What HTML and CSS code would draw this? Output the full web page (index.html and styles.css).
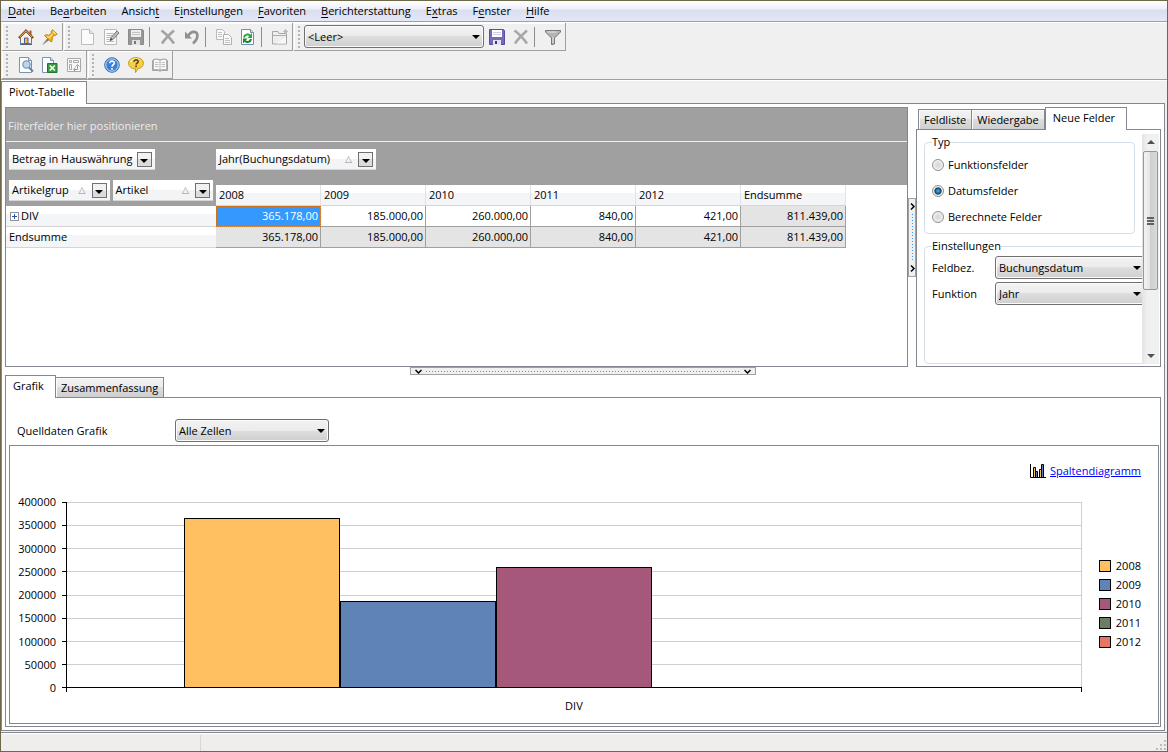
FILE: index.html
```html
<!DOCTYPE html>
<html lang="de">
<head>
    <meta charset="UTF-8">
    <meta name="viewport" content="width=device-width, initial-scale=1.0">
    <title>Pivot-Tabelle</title>
    <link rel="stylesheet" href="styles.css">
</head>
<body>
    <nav class="menubar">
        <button><u>D</u>atei</button>
        <button>Be<u>a</u>rbeiten</button>
        <button>Ansich<u>t</u></button>
        <button>E<u>i</u>nstellungen</button>
        <button><u>F</u>avoriten</button>
        <button><u>B</u>erichterstattung</button>
        <button>E<u>x</u>tras</button>
        <button>F<u>e</u>nster</button>
        <button><u>H</u>ilfe</button>
    </nav>

    <div class="toolbars">
        <div class="toolbar-row">
            <div class="toolbar">
                <i class="grip"></i>
                <button class="tool" aria-label="Start">
                    <svg viewBox="0 0 16 16"><path d="M11.500 1.500h2v5l-2-2z" fill="#b5502f"/><path d="M2.500 8.500v6h11v-6L8 3z" fill="#f6f1e6" stroke="#6d7488"/><path d="M.8 9L8 1.500 15.200 9" fill="none" stroke="#7a4a26" stroke-width="2"/><path d="M1.800 8L8 1.800 14.200 8" fill="none" stroke="#f6b445" stroke-width="1"/><path d="M6.500 9h3.500v5.500H6.500z" fill="#f2b24c" stroke="#4a5f96"/><path d="M2 15.500h12" stroke="#56617a"/></svg>
                </button>
                <button class="tool" aria-label="Anheften">
                    <svg viewBox="0 0 16 16"><path d="M.8 15.500l4.700-6 1.500 1.500z" fill="#8a7340" stroke="#8d8d8d" stroke-width=".5"/><path d="M2.500 6.500c1.500-1 3-1 4.200-.3L9.500 4.500C8.800 3 9.300 1.500 10.500.8L15.200 5c-.8 1.300-2.200 1.700-3.500 1.200L10 9c.7 1.500.4 2.800-.8 4z" fill="#f3b01d" stroke="#b97c08" stroke-width=".9"/><path d="M5 7.800l2.800.6L10.500 5M11 2.500l2.500 2.300" fill="none" stroke="#ffe48a" stroke-width="1.300"/></svg>
                </button>
            </div>
            <div class="toolbar">
                <i class="grip"></i>
                <button class="tool" aria-label="Neu">
                    <svg viewBox="0 0 16 16"><path d="M1.500.500h8l4 4v11h-12z" fill="#fbfbfb" stroke="#bdbdbd"/><path d="M9.500.500v4h4" fill="#e4e4e4" stroke="#bdbdbd"/></svg>
                </button>
                <button class="tool" aria-label="Bearbeiten">
                    <svg viewBox="0 0 16 16"><path d="M.5.500h12v15H.5z" fill="#fafafa" stroke="#b9b9b9"/><path d="M2.500 4.500h7M2.500 6.500h6M2.500 8.500h4M2.500 10.500h3M2.500 12.500h8" stroke="#bbb"/><path d="M6 11.500l1-3L13 2l2 2-6 6.500z" fill="#bdbdbd" stroke="#777"/><path d="M6 11.500l1-2.500 1.500 1.500z" fill="#444"/></svg>
                </button>
                <button class="tool" aria-label="Speichern">
                    <svg viewBox="0 0 16 16"><path d="M.5.500h14l1 1v14H.5z" fill="#979797" stroke="#8a8a8a"/><path d="M3 1h10v7H3z" fill="#ededed"/><path d="M4 3.500h8M4 5.500h8" stroke="#c4c4c4"/><path d="M4 11h8v5H4z" fill="#e2e2e2"/><path d="M6 12h2v3H6z" fill="#777"/></svg>
                </button>
                <i class="sep"></i>
                <button class="tool" aria-label="Löschen">
                    <svg viewBox="0 0 16 16"><path d="M1.500 1.500C5 4 10 9 14 14.500M14 1.500C10 5 5 10 2 14.500" stroke="#a3a3a3" stroke-width="2.600" fill="none"/></svg>
                </button>
                <button class="tool" aria-label="Rückgängig">
                    <svg viewBox="0 0 16 16"><path d="M4 7C6 3.500 9 2.500 11 3c3.500 1 3.500 7-2 11.500" fill="none" stroke="#909090" stroke-width="2.600"/><path d="M1 2.500v7h7z" fill="#909090"/></svg>
                </button>
                <i class="sep"></i>
                <button class="tool" aria-label="Kopieren">
                    <svg viewBox="0 0 16 16"><path d="M.5.500h6l2 2v8h-8z" fill="#fafafa" stroke="#b9b9b9"/><path d="M7.500 5.500h5l3 3v7h-8z" fill="#fafafa" stroke="#b0b0b0"/><path d="M2 3.500h4M2 5.500h4M2 7.500h4M9 9.500h4M9 11.500h5M9 13.500h5" stroke="#c2c2c2"/></svg>
                </button>
                <button class="tool" aria-label="Aktualisieren">
                    <svg viewBox="0 0 16 16"><path d="M1.500.500h9l3 3v12h-12z" fill="#fdfeff" stroke="#6f8fae"/><path d="M10.500.500v3h3" fill="#cfdeec" stroke="#6f8fae"/><path d="M4 8.500c.5-3 4-4 6-2" fill="none" stroke="#2ba43a" stroke-width="2"/><path d="M12 4v5H7.500z" fill="#2ba43a"/><path d="M11 10c-.5 3-4 4-6 2" fill="none" stroke="#168a2b" stroke-width="2"/><path d="M3 14.500v-5h4.500z" fill="#168a2b"/></svg>
                </button>
                <i class="sep"></i>
                <button class="tool" aria-label="Neuer Ordner">
                    <svg viewBox="0 0 16 16"><path d="M.5 15V2.500h5.500l1 2h7.500V15z" fill="#ededed" stroke="#a5a5a5"/><path d="M1 6.500h13" stroke="#b0b0b0"/><path d="M14 8v6.500H4z" fill="#f8f8f8"/><path d="M13.500 0v5M11 2.500h5M12 1l3 3M15 1l-3 3" stroke="#b4b4b4" stroke-width=".8"/></svg>
                </button>
            </div>
            <div class="toolbar">
                <i class="grip"></i>
                <div class="select select-layout">
                    <select aria-label="Layout"><option>&lt;Leer&gt;</option></select>
                </div>
                <button class="tool" aria-label="Layout speichern">
                    <svg viewBox="0 0 16 16"><path d="M.5.500h14l1 1v14H.5z" fill="#7a69b8" stroke="#5c4c9c"/><path d="M3 1h10v7H3z" fill="#fff"/><path d="M4 3.500h8M4 5.500h8" stroke="#cfcbe0"/><path d="M4 11h8v5H4z" fill="#e4e2f0"/><path d="M6 12h2v3H6z" fill="#43357c"/></svg>
                </button>
                <button class="tool" aria-label="Layout löschen">
                    <svg viewBox="0 0 16 16"><path d="M1.500 1.500C5 4 10 9 14 14.500M14 1.500C10 5 5 10 2 14.500" stroke="#a8a8a8" stroke-width="2.600" fill="none"/></svg>
                </button>
                <i class="sep"></i>
                <button class="tool" aria-label="Filter">
                    <svg viewBox="0 0 16 16"><path d="M.5 1.500h15v1.500L9.500 9v6l-3 .5V9L.5 3z" fill="#b4b4b4" stroke="#777"/><path d="M2.500 3h9M8 8v6" stroke="#e6e6e6"/></svg>
                </button>
            </div>
        </div>
        <div class="toolbar-row">
            <div class="toolbar">
                <i class="grip"></i>
                <button class="tool" aria-label="Vorschau">
                    <svg viewBox="0 0 16 16"><path d="M1.500.500h9l3 3v12h-12z" fill="#fdfeff" stroke="#7d93ab"/><path d="M10.500.500v3h3" fill="#cfdeec" stroke="#7d93ab"/><circle cx="8.500" cy="7.500" r="3.700" fill="#b9d6f3" stroke="#8097b5" stroke-width="1.300"/><path d="M11 10.500l4 4" stroke="#6f7f98" stroke-width="2"/></svg>
                </button>
                <button class="tool" aria-label="Excel-Export">
                    <svg viewBox="0 0 16 16"><path d="M.5.500h8l3 3v12h-11z" fill="#fdfeff" stroke="#7d93ab"/><path d="M8.500.500v3h3" fill="#cfdeec" stroke="#7d93ab"/><path d="M5.500 6.500h9.500v9h-9.500z" fill="#3c9a43" stroke="#23752c"/><path d="M7.800 8.500l5 5M12.800 8.500l-5 5" stroke="#fff" stroke-width="1.600"/></svg>
                </button>
                <button class="tool" aria-label="Pivot">
                    <svg viewBox="0 0 16 16"><path d="M1.500 1.500h13v13h-13z" fill="#f9f9f9" stroke="#a8a8a8"/><path d="M3.500 3.500h2v2h-2zM7.500 3.500h5v2h-5zM3.500 7.500h2v5h-2z" fill="#fff" stroke="#a8a8a8"/><path d="M8 12.500h3.500v-4M9.500 10.500l-2 2 2 2M9.500 9.500l2-2 2 2" fill="none" stroke="#999"/></svg>
                </button>
            </div>
            <div class="toolbar">
                <i class="grip"></i>
                <button class="tool" aria-label="Hilfe">
                    <svg viewBox="0 0 16 16"><circle cx="8" cy="8" r="7.300" fill="#3d7fd0" stroke="#3f73b8"/><circle cx="8" cy="8" r="6.200" fill="none" stroke="#c4dcf6"/><path d="M5.700 6.300c0-3 4.800-2.800 4.600 0-.1 1.500-2.300 1.500-2.300 3.400M8 11v1.800" fill="none" stroke="#fff" stroke-width="1.600"/></svg>
                </button>
                <button class="tool" aria-label="Direkthilfe">
                    <svg viewBox="0 0 16 16"><path d="M8 .6c4.200 0 7.400 2.300 7.400 5.600 0 3-2.500 5-5.400 5.500L7.500 15.500V12C3.500 11.800.6 9.400.6 6.200.6 2.900 3.800.6 8 .6z" fill="#f6cf46" stroke="#c39a1e"/><path d="M2.500 5C4 2 8 1.500 11 2.500" fill="none" stroke="#fff3b0" stroke-width="1.400"/><path d="M5.900 4.800c0-2.800 4.500-2.600 4.300 0-.1 1.300-2.100 1.300-2.100 2.700M8.100 8.500v1.700" fill="none" stroke="#4c4416" stroke-width="1.600"/></svg>
                </button>
                <button class="tool" aria-label="Handbuch">
                    <svg viewBox="0 0 16 16"><path d="M.5 3.500h1v-1c2.500-.8 4.500-.5 6.500.5 2-1 4-1.300 6.500-.5v1h1v10H9l-1 1-1-1H.5z" fill="#b0b0b0" stroke="#a2a2a2"/><path d="M2 3c2-.6 4-.5 5.500.5v9C6 11.800 4 11.800 2 12.200zM14 3c-2-.6-4-.5-5.500.5v9c1.500-.7 3.500-.7 5.500-.3z" fill="#fafafa"/><path d="M3 5.500h3.500M3 7.500h3.500M3 9.500h3.500M9.500 5.500H13M9.500 7.500H13M9.500 9.500H13" stroke="#c0c0c0"/></svg>
                </button>
            </div>
        </div>
    </div>

    <div class="tabs doc-tabs" role="tablist">
        <button class="tab active" role="tab">Pivot-Tabelle</button>
    </div>

    <main class="workspace">
        <div class="top">
            <section class="pivot">
                <div class="filter-drop">Filterfelder hier positionieren</div>
                <table class="pivot-table">
                    <colgroup>
                        <col class="col-rows">
                        <col class="col-value" span="6">
                        <col>
                    </colgroup>
                    <thead>
                        <tr class="fields">
                            <th class="corner" rowspan="2">
                                <div class="chips">
                                    <div class="chip">Betrag in Hauswährung <button class="drop" aria-label="Filter Betrag"></button></div>
                                </div>
                                <div class="chips fill">
                                    <div class="chip"><span>Artikelgrup</span> <i class="sort">△</i> <button class="drop" aria-label="Filter Artikelgruppe"></button></div>
                                    <div class="chip"><span>Artikel</span> <i class="sort">△</i> <button class="drop" aria-label="Filter Artikel"></button></div>
                                </div>
                            </th>
                            <th class="column-fields" colspan="7">
                                <div class="chips">
                                    <div class="chip wide"><span>Jahr(Buchungsdatum)</span> <i class="sort">△</i> <button class="drop" aria-label="Filter Jahr"></button></div>
                                </div>
                            </th>
                        </tr>
                        <tr class="years">
                            <th>2008</th>
                            <th>2009</th>
                            <th>2010</th>
                            <th>2011</th>
                            <th>2012</th>
                            <th>Endsumme</th>
                            <td></td>
                        </tr>
                    </thead>
                    <tbody>
                        <tr>
                            <th><button class="expand" aria-label="DIV aufklappen"></button>DIV</th>
                            <td class="selected">365.178,00</td>
                            <td>185.000,00</td>
                            <td>260.000,00</td>
                            <td>840,00</td>
                            <td>421,00</td>
                            <td class="sum">811.439,00</td>
                            <td class="rest"></td>
                        </tr>
                        <tr class="total">
                            <th>Endsumme</th>
                            <td>365.178,00</td>
                            <td>185.000,00</td>
                            <td>260.000,00</td>
                            <td>840,00</td>
                            <td>421,00</td>
                            <td>811.439,00</td>
                            <td class="rest"></td>
                        </tr>
                    </tbody>
                </table>
            </section>

            <div class="splitter vertical">
                <svg viewBox="0 0 5 7"><path d="M1 .5l3 3-3 3" /></svg>
                <i class="dots"></i>
                <svg viewBox="0 0 5 7"><path d="M1 .5l3 3-3 3" /></svg>
            </div>

            <aside class="side">
                <div class="tabs side-tabs" role="tablist">
                    <button class="tab" role="tab">Feldliste</button>
                    <button class="tab" role="tab">Wiedergabe</button>
                    <button class="tab active" role="tab">Neue Felder</button>
                </div>
                <div class="side-panel">
                    <form class="side-form">
                        <fieldset class="type">
                            <legend>Typ</legend>
                            <label><input type="radio" name="typ"> Funktionsfelder</label>
                            <label><input type="radio" name="typ" checked> Datumsfelder</label>
                            <label><input type="radio" name="typ"> Berechnete Felder</label>
                        </fieldset>
                        <fieldset class="settings">
                            <legend>Einstellungen</legend>
                            <div class="field">
                                <label for="feldbez">Feldbez.</label>
                                <div class="select"><select id="feldbez"><option>Buchungsdatum</option></select></div>
                            </div>
                            <div class="field">
                                <label for="funktion">Funktion</label>
                                <div class="select"><select id="funktion"><option>Jahr</option></select></div>
                            </div>
                        </fieldset>
                    </form>
                    <div class="scrollbar">
                        <svg viewBox="0 0 8 4"><path d="M0 4l4-4 4 4z"/></svg>
                        <div class="track"><div class="thumb"></div></div>
                        <svg viewBox="0 0 8 4"><path d="M0 0l4 4 4-4z"/></svg>
                    </div>
                </div>
            </aside>
        </div>

        <div class="splitter horizontal">
            <svg viewBox="0 0 7 5"><path d="M.5 1l3 3 3-3"/></svg>
            <i class="dots"></i>
            <svg viewBox="0 0 7 5"><path d="M.5 1l3 3 3-3"/></svg>
        </div>

        <section class="bottom">
            <div class="tabs" role="tablist">
                <button class="tab active" role="tab">Grafik</button>
                <button class="tab" role="tab">Zusammenfassung</button>
            </div>
            <div class="bottom-panel">
                <div class="source">
                    <label for="quelle">Quelldaten Grafik</label>
                    <div class="select"><select id="quelle"><option>Alle Zellen</option></select></div>
                </div>
                <div class="chart">
                    <div class="chart-type">
                        <svg viewBox="0 0 16 15"><path d="M.5 0v13.500H16" fill="none" stroke="#000"/><path d="M3.500 13V3.500h2V13" fill="#ffc061" stroke="#000"/><path d="M5.500 13V7.500h2V13" fill="#5f83b5" stroke="#000"/><path d="M9.500 13V5.500h2V13" fill="#ffc061" stroke="#000"/><path d="M11.500 13V.500h2V13" fill="#5f83b5" stroke="#000"/></svg>
                        <a href="#">Spaltendiagramm</a>
                    </div>
                    <div class="chart-body">
                        <div class="axis">
                            <span>400000</span>
                            <span>350000</span>
                            <span>300000</span>
                            <span>250000</span>
                            <span>200000</span>
                            <span>150000</span>
                            <span>100000</span>
                            <span>50000</span>
                            <span>0</span>
                        </div>
                        <div class="plot">
                            <div class="lines"><i></i><i></i><i></i><i></i><i></i><i></i><i></i><i></i></div>
                            <div class="bars">
                                <div class="bar y2008" style="height: 91.3%"></div>
                                <div class="bar y2009" style="height: 46.25%"></div>
                                <div class="bar y2010" style="height: 65%"></div>
                            </div>
                        </div>
                        <ul class="legend">
                            <li><i class="y2008"></i>2008</li>
                            <li><i class="y2009"></i>2009</li>
                            <li><i class="y2010"></i>2010</li>
                            <li><i class="y2011"></i>2011</li>
                            <li><i class="y2012"></i>2012</li>
                        </ul>
                        <div class="category">DIV</div>
                    </div>
                </div>
            </div>
        </section>
    </main>

    <footer class="statusbar">
        <div class="status-cell"></div>
        <svg viewBox="0 0 11 11"><path d="M8 0h2v2H8zM8 4h2v2H8zM8 8h2v2H8zM4 4h2v2H4zM4 8h2v2H4zM0 8h2v2H0z" fill="#bdbaba"/></svg>
    </footer>
</body>
</html>
```
FILE: styles.css
```css
* {
    box-sizing: border-box;
}

body {
    display: flex;
    flex-direction: column;
    min-height: 100vh;
    margin: 0;
    border: 1px solid #6e684b;
    background-color: #f0f0f0;
    color: #000;
    font-family: "Open Sans", "Noto Sans", sans-serif;
    font-size: 11px;
    line-height: 16px;
}

button, select, input {
    margin: 0;
    padding: 0;
    border: none;
    background: none;
    color: inherit;
    font: inherit;
}

i {
    font-style: normal;
}

svg {
    display: block;
}

/* Menü */
.menubar {
    display: flex;
    gap: 15px;
    height: 21px;
    padding: 0 7px;
    border-bottom: 1px solid #a0a0a0;
    background: linear-gradient(#fff, #eef0f8 40%, #d9dff0 45%, #e3e7f6);
}

.menubar u {
    text-underline-offset: 2px;
}

/* Symbolleisten */
.toolbars {
    padding: 0 1px;
    border-bottom: 1px solid #a0a0a0;
    border-top: 1px solid #fff;
}

.toolbar-row {
    display: flex;
    gap: 1px;
}

.toolbar {
    display: flex;
    align-items: center;
    height: 28px;
    border: 1px solid #a0a0a0;
    border-width: 0 1px 1px 0;
    box-shadow: inset 1px 1px #fff;
}

.grip {
    width: 2px;
    height: 22px;
    margin: 0 4px;
    background: repeating-linear-gradient(#b4b4b4 0 2px, transparent 2px 4px);
}

.grip + .tool {
    margin-left: 2px;
}

.tool {
    display: grid;
    place-items: center;
    width: 24px;
    height: 24px;
}

.tool svg {
    width: 16px;
    height: 16px;
}

.sep {
    width: 1px;
    height: 20px;
    margin: 0 6px 0 1px;
    background-color: #8c8c8c;
}

.select {
    position: relative;
}

.select select {
    display: block;
    width: 100%;
    height: 23px;
    padding: 0 3px;
    border: 1px solid #707070;
    border-radius: 3px;
    background: linear-gradient(#f3f3f3, #ebebeb 50%, #dedede 50%, #cfcfcf);
    box-shadow: inset 0 0 0 1px #fbfbfb;
    appearance: none;
}

.select::after {
    content: "";
    position: absolute;
    top: 10px;
    right: 4px;
    border: 4px solid transparent;
    border-top-color: #000;
    border-bottom: none;
}

.select-layout {
    width: 180px;
    margin-right: 1px;
}

/* Reiter */
.tabs {
    display: flex;
    align-items: flex-end;
    height: 22px;
}

.tab {
    height: 20px;
    padding: 0 5px;
    border: 1px solid #828790;
    border-bottom: none;
    background: linear-gradient(#f2f2f2, #ebebeb 50%, #dddddd 50%, #cfcfcf);
    box-shadow: inset 1px 1px #fbfbfb;
}

.tab + .tab {
    border-left: none;
}

.tab.active {
    position: relative;
    height: 23px;
    margin-bottom: -1px;
    padding: 0 11px 2px 7px;
    border-left: 1px solid #828790;
    background: #fff;
    box-shadow: none;
}

.doc-tabs {
    height: 23px;
    border-top: 1px solid #fff;
}

.workspace {
    display: flex;
    flex: 1;
    flex-direction: column;
    margin-right: 2px;
    padding: 3px;
    border: 1px solid #828790;
    background-color: #fff;
}

.top {
    display: flex;
    height: 260px;
}

/* Pivot-Tabelle */
.pivot {
    flex: 1;
    min-width: 0;
    border: 1px solid #828790;
}

.filter-drop {
    height: 34px;
    padding: 10px 2px 0;
    background-color: #a0a0a0;
    color: #ececec;
    box-shadow: inset 0 -1px #f0f0f0;
}

.pivot-table {
    width: 100%;
    border-spacing: 0;
    table-layout: fixed;
}

.pivot-table th, .pivot-table td {
    height: 21px;
    padding: 0 2px;
    font-weight: normal;
    text-align: left;
}

.pivot-table th {
    padding: 0 3px;
}

.col-rows {
    width: 210px;
}

.col-value {
    width: 105px;
}

.pivot-table .fields th {
    height: 43px;
    background-color: #a0a0a0;
    vertical-align: top;
}

.pivot-table .corner {
    padding: 7px 3px 5px;
}

.pivot-table .column-fields {
    padding: 7px 0;
}

.chips {
    display: flex;
    gap: 3px;
}

.chips.fill {
    margin-top: 10px;
}

.fill .chip {
    flex: 1;
}

.chip {
    display: flex;
    align-items: center;
    gap: 4px;
    height: 21px;
    padding: 0 3px;
    border-bottom: 1px solid #d5d5d5;
    background: linear-gradient(#fff 50%, #f2f4f6 50%);
}

.chip.wide {
    width: 160px;
}

.sort {
    margin: 0 2px 0 auto;
    color: #8c8c8c;
    font-family: "DejaVu Sans", sans-serif;
    font-size: 9px;
}

.drop {
    display: grid;
    place-items: end center;
    width: 15px;
    height: 15px;
    padding-bottom: 3px;
    border: 1px solid #707070;
    background: linear-gradient(#f2f2f2 50%, #dcdcdc 50%);
}

.drop::after {
    content: "";
    border: 4px solid transparent;
    border-top-color: #000;
    border-bottom: none;
}

.years th, tbody th {
    border-bottom: 1px solid #d5d5d5;
    background: linear-gradient(#fff 40%, #f3f5f6 40%);
}

.years th {
    border-right: 1px solid #e0e3e6;
}

tbody td {
    border: 1px solid #a0a0a0;
    border-width: 0 1px 1px 0;
}

.pivot-table tbody td {
    text-align: right;
}

.sum, .total td {
    background-color: #e4e4e4;
}

.selected {
    outline: 1px dotted #c8701c;
    outline-offset: -1px;
    background-color: #3399ff;
    color: #fff;
}

.pivot-table .rest {
    border: none;
    background: none;
}

.expand {
    width: 9px;
    height: 9px;
    margin: 0 2px 0 1px;
    border: 1px solid #919191;
    background:
        linear-gradient(#2b4fa0, #2b4fa0) center / 5px 1px no-repeat,
        linear-gradient(#2b4fa0, #2b4fa0) center / 1px 5px no-repeat,
        #fff;
}

/* Trennleisten */
.splitter {
    display: flex;
    align-items: center;
    gap: 4px;
    border: 1px solid #a0a0a0;
    background-color: #f0f0f0;
}

.splitter path {
    fill: none;
    stroke: #000;
    stroke-width: 1.5;
}

.splitter .dots {
    flex: 1;
}

.splitter.vertical {
    flex-direction: column;
    align-self: center;
    width: 8px;
    height: 79px;
    padding: 4px 0;
}

.vertical svg {
    width: 5px;
    height: 7px;
}

.vertical .dots {
    width: 1px;
    background: repeating-linear-gradient(#3399ff 0 1px, transparent 1px 3px);
}

.splitter.horizontal {
    align-self: center;
    width: 30%;
    height: 8px;
    padding: 0 4px;
}

.horizontal svg {
    width: 7px;
    height: 5px;
}

.horizontal .dots {
    height: 1px;
    background: repeating-linear-gradient(90deg, #3399ff 0 1px, transparent 1px 3px);
}

/* Feldbereich */
.side {
    display: flex;
    flex-direction: column;
    width: 245px;
}

.side-tabs {
    padding-left: 2px;
}

.side-panel {
    display: flex;
    flex: 1;
    padding: 4px 1px 2px 7px;
    border: 1px solid #828790;
}

.side-form {
    display: flex;
    flex: 1;
    flex-direction: column;
    gap: 4px;
    overflow: hidden;
}

fieldset {
    display: flex;
    flex-direction: column;
    min-width: 0;
    margin: 0;
    border: 1px solid #d5dfe5;
    border-radius: 4px;
}

legend {
    padding: 0;
}

.type {
    gap: 10px;
    margin-right: 7px;
    padding: 7px 7px 8px;
}

.type label {
    display: flex;
    align-items: center;
    gap: 4px;
}

.type input {
    width: 12px;
    height: 12px;
    border: 1px solid #8e8f8f;
    border-radius: 50%;
    background: radial-gradient(#d5d5d5, #f6f6f6);
    box-shadow: inset 0 0 0 1px #f4f4f4;
    appearance: none;
}

.type input:checked {
    background: radial-gradient(#4cc0ea, #0f3f63 45%, #e8eef2 60%);
}

.settings {
    flex: 1;
    gap: 3px;
    margin-right: -8px;
    padding: 2px 7px;
}

.field {
    display: flex;
    align-items: center;
}

.field label {
    width: 63px;
}

.field .select {
    flex: 1;
    margin-right: -8px;
}

.field .select::after {
    right: 9px;
}

.scrollbar {
    display: flex;
    flex-direction: column;
    align-items: center;
    width: 17px;
    padding: 6px 1px;
    background: linear-gradient(90deg, #e3e3e3, #f0f0f0 30%);
}

.scrollbar svg {
    width: 8px;
    height: 4px;
    fill: #505050;
}

.track {
    flex: 1;
    width: 100%;
    padding: 7px 0;
}

.thumb {
    height: 71%;
    border: 1px solid #979797;
    border-radius: 2px;
    background:
        repeating-linear-gradient(#606060 0 2px, transparent 2px 3px) center / 7px 8px no-repeat,
        linear-gradient(90deg, #f3f3f3, #e6e6e6 45%, #cfcfcf 50%, #dadada);
}

/* Grafik */
.bottom {
    display: flex;
    flex: 1;
    flex-direction: column;
}

.bottom-panel {
    display: flex;
    flex: 1;
    flex-direction: column;
    padding: 0 1px 2px 3px;
    border: 1px solid #828790;
}

.source {
    display: flex;
    align-items: center;
    padding: 21px 8px 3px;
}

.source label {
    width: 158px;
}

.source .select {
    width: 154px;
}

.chart {
    flex: 1;
    border: 1px solid #828790;
}

.chart-type {
    display: flex;
    align-items: center;
    justify-content: flex-end;
    gap: 4px;
    padding: 17px 17px 23px;
}

.chart-type svg {
    width: 16px;
    height: 15px;
}

.chart-type a {
    color: #0000ff;
}

.chart-body {
    display: grid;
    grid-template-columns: 46px 1fr auto;
    column-gap: 10px;
}

.axis {
    display: flex;
    flex-direction: column;
    justify-content: space-between;
    margin: -8px 0;
    text-align: right;
}

.plot {
    display: grid;
    position: relative;
    height: 186px;
    border: 1px solid #000;
    border-width: 0 0 1px 1px;
}

.lines, .bars {
    grid-area: 1 / 1;
}

.lines {
    display: flex;
    flex-direction: column;
    border-right: 1px solid #cfcfcf;
}

.lines i {
    position: relative;
    flex: 1;
    border-top: 1px solid #cfcfcf;
}

/* Teilstriche links der Achse */
.lines i::before, .plot::before {
    content: "";
    position: absolute;
    top: -1px;
    left: -5px;
    width: 4px;
    height: 1px;
    background-color: #000;
}

.plot::before {
    top: auto;
    bottom: -1px;
}

.plot::after {
    content: "";
    position: absolute;
    right: 0;
    bottom: -5px;
    left: -1px;
    height: 4px;
    border: 1px solid #000;
    border-width: 0 1px;
}

.bars {
    display: grid;
    grid-template-columns: 3fr repeat(5, 4fr) 3fr;
    align-items: end;
    z-index: 1;
}

.bar {
    border: 1px solid #000;
    border-bottom: none;
}

.bar:first-child {
    grid-column: 2;
}

.y2008 { background-color: #ffc061; }
.y2009 { background-color: #5f83b5; }
.y2010 { background-color: #a5587a; }
.y2011 { background-color: #6c7d64; }
.y2012 { background-color: #e57662; }

.legend {
    display: flex;
    flex-direction: column;
    align-self: center;
    gap: 3px;
    margin: 18px 0 0;
    padding: 0 17px 0 7px;
    list-style: none;
}

.legend li {
    display: flex;
    align-items: center;
    gap: 5px;
}

.legend i {
    width: 12px;
    height: 12px;
    border: 1px solid #000;
}

.category {
    grid-column: 2;
    padding-top: 10px;
    text-align: center;
}

/* Statuszeile */
.statusbar {
    display: flex;
    align-items: flex-end;
    justify-content: space-between;
    height: 19px;
    margin-top: 1px;
    border-top: 1px solid #828790;
    background-color: #f0eded;
    box-shadow: inset 0 1px #fff;
}

.status-cell {
    width: 200px;
    height: 16px;
    border-right: 1px solid #d7d7d7;
}

.statusbar svg {
    width: 11px;
    height: 11px;
}
```
